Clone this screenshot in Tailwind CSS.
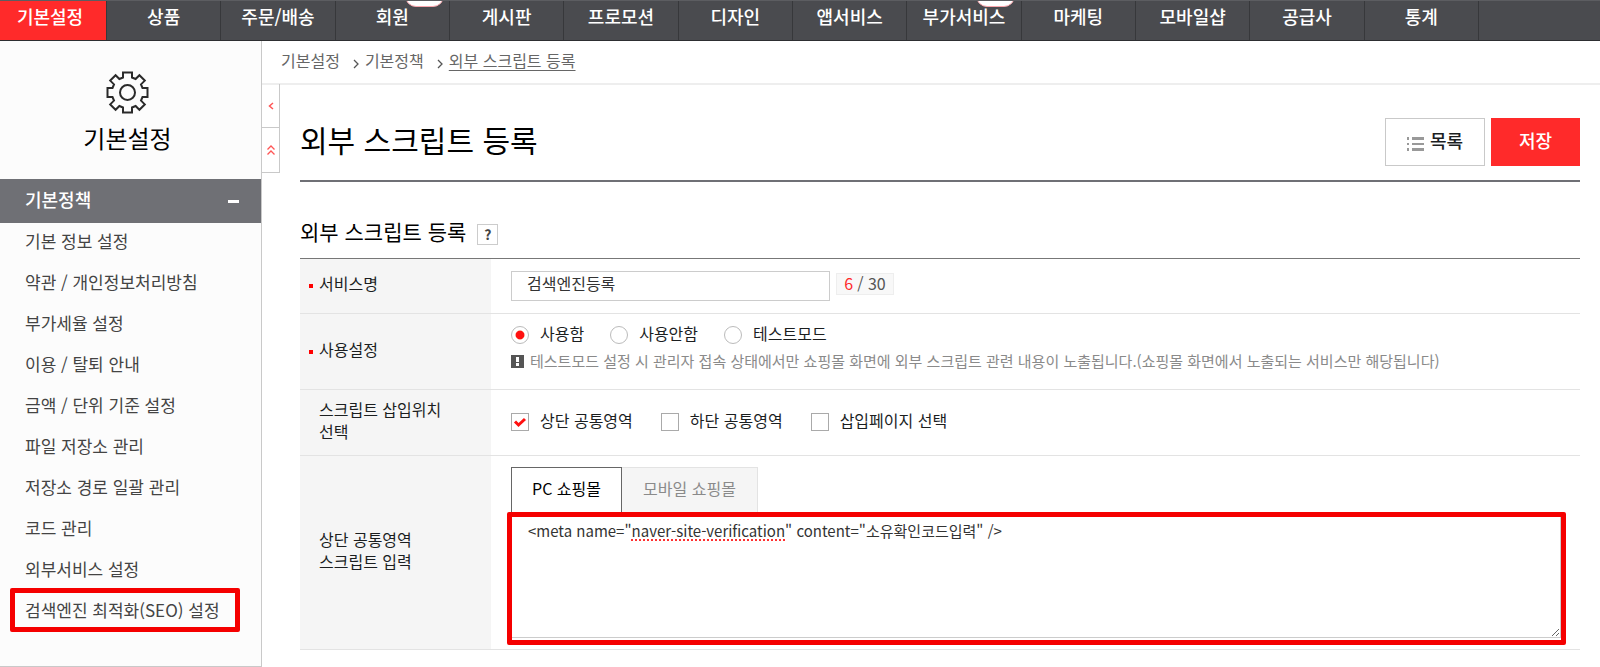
<!DOCTYPE html>
<html lang="ko">
<head>
<meta charset="utf-8">
<meta name="viewport" content="width=device-width, initial-scale=1">
<title>외부 스크립트 등록</title>
<script src="https://cdn.jsdelivr.net/npm/@tailwindcss/browser@4"></script>
</head>
<body class="bg-white font-['Noto_Sans_CJK_KR',sans-serif] text-base text-[#1b1e1f]">

<header class="relative flex h-[41px] overflow-hidden border-t border-b border-t-[#5c5d61] border-b-[#2d2e31] bg-[#4a4b4f] text-lg leading-[30px] font-medium text-white">
  <a href="#" class="-my-px w-[106px] shrink-0 bg-[#ff2a2a] pt-px pr-[6px] text-center">기본설정</a>
  <nav aria-label="주 메뉴" class="grid w-[1373px] grid-cols-12 border-l border-[#37383b] text-center">
    <a href="#" class="border-r border-[#37383b]">상품</a>
    <a href="#" class="border-r border-[#37383b]">주문/배송</a>
    <a href="#" class="relative border-r border-[#37383b]">회원<span class="absolute -top-4 left-[69px] h-[22px] w-[39px] rounded-full border border-[#f9a5ac] bg-white text-center text-sm leading-4 text-[#f98b95]">New</span></a>
    <a href="#" class="border-r border-[#37383b]">게시판</a>
    <a href="#" class="border-r border-[#37383b]">프로모션</a>
    <a href="#" class="border-r border-[#37383b]">디자인</a>
    <a href="#" class="border-r border-[#37383b]">앱서비스</a>
    <a href="#" class="relative border-r border-[#37383b]">부가서비스<span class="absolute -top-4 left-[69px] h-[22px] w-[39px] rounded-full border border-[#f9a5ac] bg-white text-center text-sm leading-4 text-[#f98b95]">New</span></a>
    <a href="#" class="border-r border-[#37383b]">마케팅</a>
    <a href="#" class="border-r border-[#37383b]">모바일샵</a>
    <a href="#" class="border-r border-[#37383b]">공급사</a>
    <a href="#" class="border-r border-[#37383b]">통계</a>
  </nav>
</header>

<div class="flex items-start">
  <aside class="w-[262px] shrink-0 border-r border-b border-[#c9c9c9] bg-[#fcfcfc]">
    <div class="flex h-[138px] flex-col items-center pt-[30px] pr-[6px]">
      <svg class="size-[43px]" viewBox="0 0 43 43" fill="none" stroke="#2a2a2a" stroke-width="2" aria-hidden="true">
        <path d="M17 1.500h9v5l3.600 1.500 3.800-3.800 5.400 5.400-3.800 3.800 1.500 3.600h5v9h-5l-1.500 3.600 3.800 3.800-5.400 5.400-3.800-3.800-3.600 1.500v5h-9v-5l-3.600-1.500-3.800 3.800-5.400-5.400 3.800-3.800-1.500-3.600h-5v-9h5l1.500-3.600-3.800-3.800 5.400-5.400 3.800 3.800 3.600-1.500z"/>
        <circle cx="21.500" cy="21.500" r="7.500"/>
      </svg>
      <h2 class="mt-1 text-2xl leading-10 text-black">기본설정</h2>
    </div>
    <button type="button" class="flex h-11 w-full items-center justify-between bg-[#6f7075] pr-[22px] pl-[25px] text-lg font-medium text-white">
      <span class="pb-1">기본정책</span>
      <span class="h-[3px] w-[11px] bg-white"></span>
    </button>
    <ul class="flex flex-col gap-[5px] pb-[38px] pl-[25px] text-[17px] leading-9 text-[#444]">
      <li><a href="#">기본 정보 설정</a></li>
      <li><a href="#">약관 / 개인정보처리방침</a></li>
      <li><a href="#">부가세율 설정</a></li>
      <li><a href="#">이용 / 탈퇴 안내</a></li>
      <li><a href="#">금액 / 단위 기준 설정</a></li>
      <li><a href="#">파일 저장소 관리</a></li>
      <li><a href="#">저장소 경로 일괄 관리</a></li>
      <li><a href="#">코드 관리</a></li>
      <li><a href="#">외부서비스 설정</a></li>
      <li class="relative"><a href="#">검색엔진 최적화(SEO) 설정</a><span class="pointer-events-none absolute -top-1 -bottom-1 -left-[15px] right-[21px] rounded-xs border-5 border-[#f50000]"></span></li>
    </ul>
  </aside>

  <div class="min-w-0 flex-1">
    <nav aria-label="현재 위치" class="flex h-11 items-center border-b-2 border-[#eee] pb-[5px] pl-[19px] text-[#666]">
      <a href="#">기본설정</a>
      <svg class="mr-1 ml-3 mt-2 h-3 w-2" viewBox="0 0 8 12" fill="none" stroke="#555" stroke-width="1.300" aria-hidden="true"><path d="M2 2l4 4-4 4"/></svg>
      <a href="#" class="ml-px">기본정책</a>
      <svg class="mr-1 ml-3 mt-2 h-3 w-2" viewBox="0 0 8 12" fill="none" stroke="#555" stroke-width="1.300" aria-hidden="true"><path d="M2 2l4 4-4 4"/></svg>
      <a href="#" class="ml-px underline underline-offset-3">외부 스크립트 등록</a>
    </nav>

    <div class="flex items-start">
      <div class="-mt-px flex w-[18px] shrink-0 flex-col">
        <button type="button" aria-label="메뉴 접기" class="flex h-11 items-center justify-center border-r border-b border-[#c9c9c9]">
          <svg class="size-2" viewBox="0 0 8 8" fill="none" stroke="#f55" stroke-width="1.500"><path d="M6 1L2.500 4 6 7"/></svg>
        </button>
        <button type="button" aria-label="모두 접기" class="flex h-[45px] items-center justify-center border-r border-b border-[#c9c9c9]">
          <svg class="h-3 w-2" viewBox="0 0 8 12" fill="none" stroke="#f55" stroke-width="1.300"><path d="M.5 5.500L4 2l3.500 3.500M.5 10.500L4 7l3.500 3.500"/></svg>
        </button>
      </div>

      <main class="min-w-0 flex-1 px-5">
        <div class="flex h-[97px] items-start justify-between border-b-2 border-[#6f7075] pt-[33px]">
          <h1 class="text-[30px] leading-[42px] text-black">외부 스크립트 등록</h1>
          <div class="flex gap-[6px] text-lg font-medium">
            <button type="button" class="flex h-12 w-[100px] items-center justify-center gap-[6px] border border-[#c9c9c9] pb-1">
              <svg class="mt-2 h-4 w-[17px]" viewBox="0 0 17 16" fill="#999" aria-hidden="true"><path d="M0 1h2v3H0zM5 1h12v3H5zM0 7h2v2H0zM5 7h12v2H5zM0 12h2v3H0zM5 12h12v3H5z"/></svg>
              목록
            </button>
            <button type="button" class="h-12 w-[89px] bg-[#ff2a2a] pb-1 text-white">저장</button>
          </div>
        </div>

        <div class="flex h-[76px] items-end gap-[11px] pb-[9px]">
          <h2 class="text-[21px] leading-9 text-black">외부 스크립트 등록</h2>
          <button type="button" aria-label="도움말" class="mb-1 flex size-[21px] items-center justify-center border border-[#ccc] pb-px text-sm font-bold text-[#444]">?</button>
        </div>

        <table class="w-full border-separate border-spacing-0 border-t border-[#777] text-left">
          <tbody>
            <tr>
              <th scope="row" class="h-[55px] w-[191px] border-b border-[#e3e3e3] bg-[#f5f5f5] pb-[6px] pl-[9px] font-normal">
                <label for="service" class="flex items-center gap-[6px]"><span class="mt-[6px] size-1 bg-[#f00]"></span>서비스명</label>
              </th>
              <td class="border-b border-[#e3e3e3] pl-5">
                <div class="flex items-start gap-[6px]">
                  <input id="service" type="text" value="검색엔진등록" maxlength="30" class="h-[30px] w-[319px] border border-[#ccc] px-[15px] pb-[6px] text-[#333]">
                  <span class="mt-[2px] flex h-[22px] w-[58px] items-center justify-center gap-1 border border-[#eee] bg-[#f8f8f8] pb-[2px] text-[#555]"><span class="text-[#ff2a2a]">6</span><span>/ 30</span></span>
                </div>
              </td>
            </tr>
            <tr>
              <th scope="row" class="h-[76px] border-b border-[#e3e3e3] bg-[#f5f5f5] pb-[6px] pl-[9px] font-normal">
                <span class="flex items-center gap-[6px]"><span class="mt-[6px] size-1 bg-[#f00]"></span>사용설정</span>
              </th>
              <td class="border-b border-[#e3e3e3] pb-[10px] pl-5">
                <div role="radiogroup" aria-label="사용설정" class="flex gap-[26px] leading-7">
                  <label class="flex items-center gap-[11px]"><input type="radio" name="use" checked class="mt-1 size-[18px] appearance-none rounded-full border border-[#bbb] bg-white checked:bg-radial checked:from-[#ff1010] checked:from-[4px] checked:to-white checked:to-[5px]"><span>사용함</span></label>
                  <label class="flex items-center gap-[11px]"><input type="radio" name="use" class="mt-1 size-[18px] appearance-none rounded-full border border-[#bbb] bg-white"><span>사용안함</span></label>
                  <label class="flex items-center gap-[11px]"><input type="radio" name="use" class="mt-1 size-[18px] appearance-none rounded-full border border-[#bbb] bg-white"><span>테스트모드</span></label>
                </div>
                <p class="flex items-center gap-[6px] text-[15px] leading-7 text-[#8a8a8a]">
                  <svg class="mt-[2px] size-[13px] shrink-0" viewBox="0 0 13 13" aria-hidden="true"><path fill="#555" d="M0 0h13v13H0z"/><path fill="#fff" d="M5 2h3v5H5zM5 8h3v3H5z"/></svg>
                  <span>테스트모드 설정 시 관리자 접속 상태에서만 쇼핑몰 화면에 외부 스크립트 관련 내용이 노출됩니다.(쇼핑몰 화면에서 노출되는 서비스만 해당됩니다)</span>
                </p>
              </td>
            </tr>
            <tr>
              <th scope="row" class="h-[66px] border-b border-[#e3e3e3] bg-[#f5f5f5] pb-[6px] pl-[19px] leading-[22px] font-normal">스크립트 삽입위치<br>선택</th>
              <td class="border-b border-[#e3e3e3] pb-[6px] pl-5">
                <div role="group" aria-label="스크립트 삽입위치 선택" class="flex gap-7 leading-7">
                  <label class="flex items-center gap-[11px]">
                    <span class="relative mt-1 flex">
                      <input type="checkbox" checked class="size-[18px] appearance-none border border-[#aaa] bg-white">
                      <svg class="pointer-events-none absolute inset-0 size-[18px]" viewBox="0 0 18 18" fill="none" stroke="#ff1010" stroke-width="3" aria-hidden="true"><path d="M4 8.500l3.500 3.500L14 6"/></svg>
                    </span>
                    <span>상단 공통영역</span></label>
                  <label class="flex items-center gap-[11px]"><input type="checkbox" class="mt-1 size-[18px] appearance-none border border-[#aaa] bg-white"><span>하단 공통영역</span></label>
                  <label class="flex items-center gap-[11px]"><input type="checkbox" class="mt-1 size-[18px] appearance-none border border-[#aaa] bg-white"><span>삽입페이지 선택</span></label>
                </div>
              </td>
            </tr>
            <tr>
              <th scope="row" class="border-b border-[#e3e3e3] bg-[#f5f5f5] pb-[6px] pl-[19px] leading-[22px] font-normal"><label for="code">상단 공통영역<br>스크립트 입력</label></th>
              <td class="border-b border-[#e3e3e3] pt-[11px] pr-[19px] pb-[11px] pl-5">
                <div role="tablist" class="flex h-[45px]">
                  <button type="button" role="tab" aria-selected="true" class="w-[111px] border border-b-0 border-[#666] pb-1 text-black">PC 쇼핑몰</button>
                  <button type="button" role="tab" aria-selected="false" class="w-[136px] border border-b-0 border-l-0 border-[#e3e3e3] bg-[#f5f5f5] pb-1 text-[#8a8a8a]">모바일 쇼핑몰</button>
                </div>
                <div class="relative">
                  <textarea id="code" spellcheck="false" class="block h-[126px] w-full border border-[#ccc] px-4 py-[6px] text-[15px] leading-6 text-[#333]">&lt;meta name="naver-site-verification" content="소유확인코드입력" /&gt;</textarea>
                  <span class="pointer-events-none absolute top-[27px] left-[120px] w-[154px] border-b-2 border-dotted border-[#ff3030]"></span>
                  <span class="pointer-events-none absolute -right-[5px] -bottom-[7px] top-0 -left-1 rounded-xs border-5 border-[#f50000]"></span>
                </div>
              </td>
            </tr>
          </tbody>
        </table>
      </main>
    </div>
  </div>
</div>
</body>
</html>
